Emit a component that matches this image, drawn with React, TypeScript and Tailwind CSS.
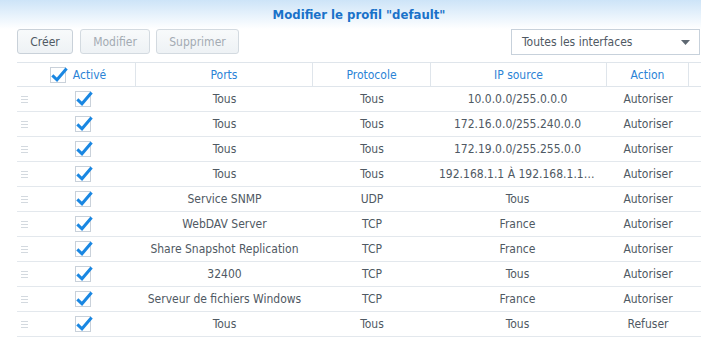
const rows = [
  ["Tous", "Tous", "10.0.0.0/255.0.0.0", "Autoriser"],
  ["Tous", "Tous", "172.16.0.0/255.240.0.0", "Autoriser"],
  ["Tous", "Tous", "172.19.0.0/255.255.0.0", "Autoriser"],
  ["Tous", "Tous", "192.168.1.1 À 192.168.1.100", "Autoriser"],
  ["Service SNMP", "UDP", "Tous", "Autoriser"],
  ["WebDAV Server", "TCP", "France", "Autoriser"],
  ["Share Snapshot Replication", "TCP", "France", "Autoriser"],
  ["32400", "TCP", "Tous", "Autoriser"],
  ["Serveur de fichiers Windows", "TCP", "France", "Autoriser"],
  ["Tous", "Tous", "Tous", "Refuser"],
];

function Check() {
  return (
    <svg width="17" height="16" viewBox="0 0 17 16" className="overflow-visible shrink-0">
      <rect x="0.5" y="0.5" width="15" height="15" fill="#fff" stroke="#c9d1da" />
      <path d="M2.3 8.3 L7 12.8 L16.6 1.6" fill="none" stroke="#1a87e2" strokeWidth="3" strokeLinejoin="miter" />
    </svg>
  );
}

function Handle() {
  return (
    <svg width="7" height="7" viewBox="0 0 7 7" className="shrink-0">
      <rect x="0" y="0" width="7" height="1" fill="#d3d9df" />
      <rect x="0" y="3" width="7" height="1" fill="#d3d9df" />
      <rect x="0" y="6" width="7" height="1" fill="#d3d9df" />
    </svg>
  );
}

export default function App() {
  return (
    <div
      className="w-[701px] h-[354px] bg-white overflow-hidden text-[12px] text-[#4f5963]"
      style={{ fontFamily: '"DejaVu Sans Condensed", "DejaVu Sans", sans-serif' }}
    >
      <div className="h-[29px] bg-gradient-to-b from-[#cde4f8] to-[#ffffff] flex items-center justify-center pl-[17px]">
        <span className="font-bold text-[13px] text-[#1a72c9]">Modifier le profil "default"</span>
      </div>
      <div className="flex items-start pl-[17px] pr-[1px] h-[33px]">
        <button className="w-[56px] h-[25px] rounded-[3px] border border-[#c9d1d9] bg-gradient-to-b from-[#f8fafb] to-[#eef2f5] text-[#4f5963]">
          Créer
        </button>
        <button className="ml-[7px] w-[70px] h-[25px] rounded-[3px] border border-[#d3dae0] bg-gradient-to-b from-[#f8fafb] to-[#eef2f5] text-[#a3abb3]">
          Modifier
        </button>
        <button className="ml-[6px] w-[83px] h-[25px] rounded-[3px] border border-[#d3dae0] bg-gradient-to-b from-[#f8fafb] to-[#eef2f5] text-[#a3abb3]">
          Supprimer
        </button>
        <div className="ml-auto w-[189px] h-[26px] border border-[#c7d1db] bg-white flex items-center pl-[10px] pr-[9px]">
          <span className="flex-1 text-[#4f5963]">Toutes les interfaces</span>
          <svg width="9" height="5" viewBox="0 0 9 5">
            <path d="M0 0 H9 L4.5 5 Z" fill="#5e6872" />
          </svg>
        </div>
      </div>
      <div className="ml-[17px]">
        <div className="flex h-[25px] border-t border-b border-[#dfe5eb] text-[#2b83d6]">
          <div className="w-[119px] flex items-center justify-center gap-[6px] pl-[4px] border-r border-[#dfe5eb]">
            <Check />
            <span>Activé</span>
          </div>
          <div className="w-[177px] flex items-center justify-center border-r border-[#dfe5eb]">Ports</div>
          <div className="w-[118px] flex items-center justify-center border-r border-[#dfe5eb]">Protocole</div>
          <div className="w-[176px] flex items-center justify-center border-r border-[#dfe5eb]">IP source</div>
          <div className="w-[82px] flex items-center justify-center border-r border-[#dfe5eb]">Action</div>
          <div className="flex-1" />
        </div>
        {rows.map((r, i) => (
          <div key={i} className="flex h-[25px] border-b border-[#e3e8ed] items-center">
            <div className="w-[119px] flex items-center pl-[4px]">
              <Handle />
              <div className="ml-[47px] flex items-center">
                <Check />
              </div>
            </div>
            <div className="w-[177px] text-center truncate px-2">{r[0]}</div>
            <div className="w-[118px] text-center truncate px-2">{r[1]}</div>
            <div className="w-[176px] text-center truncate pl-[8px] pr-[11px]">{r[2]}</div>
            <div className="w-[82px] text-center truncate px-1">{r[3]}</div>
            <div className="flex-1" />
          </div>
        ))}
      </div>
    </div>
  );
}
